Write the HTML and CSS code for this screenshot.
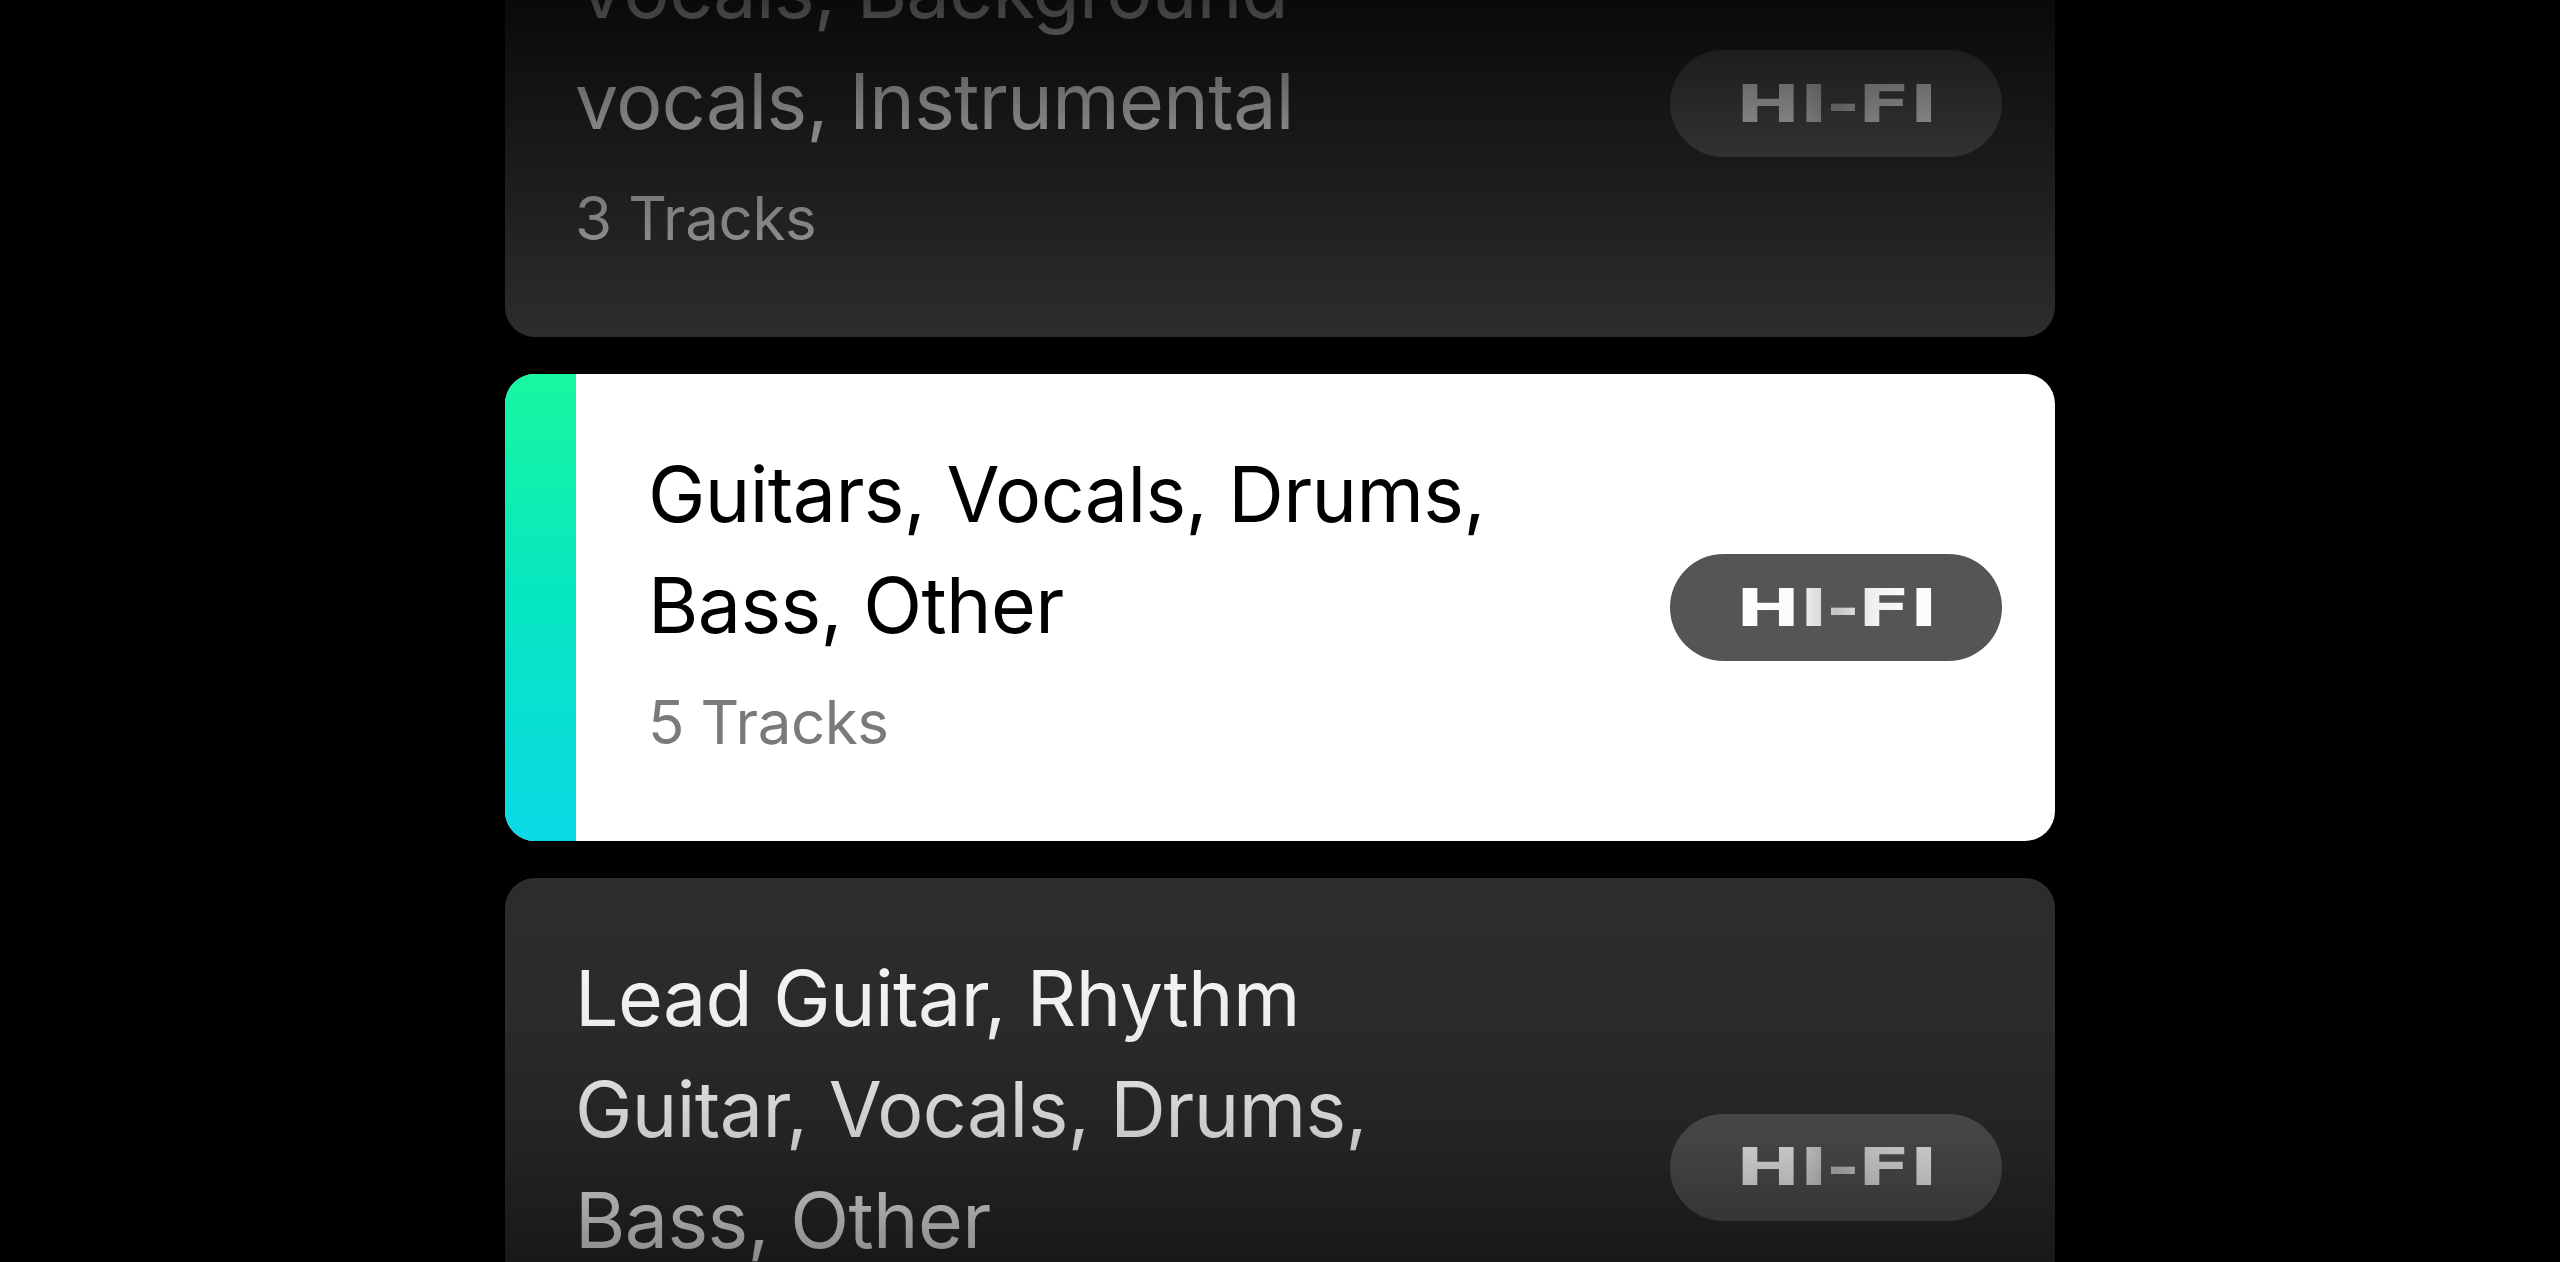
FILE: index.html
```html
<!DOCTYPE html>
<html lang="en">
<head>
<meta charset="utf-8">
<title>Stem options</title>
<link rel="stylesheet" href="styles.css">
</head>
<body>
<main class="list">
  <article class="card">
    <div class="info">
      <h2 class="title">Vocals, Background<br>vocals, Instrumental</h2>
      <p class="count">3 Tracks</p>
    </div>
    <span class="badge"><span class="badge-text">HI-FI</span></span>
  </article>
  <article class="card card--selected">
    <span class="accent"></span>
    <div class="info">
      <h2 class="title">Guitars, Vocals, Drums,<br>Bass, Other</h2>
      <p class="count">5 Tracks</p>
    </div>
    <span class="badge"><span class="badge-text">HI-FI</span></span>
  </article>
  <article class="card">
    <div class="info">
      <h2 class="title">Lead Guitar, Rhythm<br>Guitar, Vocals, Drums,<br>Bass, Other</h2>
      <p class="count">6 Tracks</p>
    </div>
    <span class="badge"><span class="badge-text">HI-FI</span></span>
  </article>
</main>
<div class="fade"></div>
</body>
</html>
```
FILE: styles.css
```css
html, body {
  margin: 0;
  padding: 0;
  background: #000;
  height: 100%;
  overflow: hidden;
}

body {
  font-family: Inter, "Noto Sans", "Liberation Sans", sans-serif;
  -webkit-font-smoothing: antialiased;
}

.list {
  width: 1550px;
  margin: -130px auto 0;
  display: flex;
  flex-direction: column;
  gap: 37px;
}

.card {
  display: flex;
  align-items: center;
  background: #2d2d2d;
  border-radius: 30px;
  overflow: hidden;
  color: #fbfbfb;
}

.info {
  flex: 1;
  padding: 65px 0 83px 70px;
}

.title {
  margin: 0;
  font-size: 77px;
  line-height: 111px;
  font-weight: 400;
  letter-spacing: -0.6px;
}

.count {
  margin: 25px 0 0;
  font-size: 60px;
  line-height: 72px;
  color: #b2b2b2;
  letter-spacing: -0.4px;
}

.card--selected {
  background: #fff;
  color: #000;
}

.card--selected .count {
  color: #7a7a7a;
}

.card--selected .info {
  padding-left: 72px;
}

.accent {
  align-self: stretch;
  width: 71px;
  flex: none;
  background: linear-gradient(to bottom, #18f7a0 0%, #06e6c2 50%, #0bd8e5 100%);
}

.badge {
  flex: none;
  width: 332px;
  height: 107px;
  margin-right: 53px;
  border-radius: 54px;
  background: #555;
  display: flex;
  align-items: center;
  justify-content: center;
}

.badge-text {
  display: inline-block;
  font-family: "DejaVu Sans", "Liberation Sans", sans-serif;
  font-weight: 700;
  font-size: 52px;
  line-height: 1;
  letter-spacing: -1px;
  transform: scaleX(1.5);
  background: linear-gradient(90deg, #fff 0%, #fafafa 30%, #c4c4c4 50%, #f0f0f0 68%, #fff 100%);
  -webkit-background-clip: text;
  background-clip: text;
  color: transparent;
}

.fade {
  position: fixed;
  inset: 0;
  pointer-events: none;
  background: linear-gradient(to bottom,
    rgba(0, 0, 0, 0.77) 0px,
    rgba(0, 0, 0, 0) 336px,
    rgba(0, 0, 0, 0) 878px,
    rgba(0, 0, 0, 0.05) 1020px,
    rgba(0, 0, 0, 0.2) 1140px,
    rgba(0, 0, 0, 0.45) 1262px);
}
```
